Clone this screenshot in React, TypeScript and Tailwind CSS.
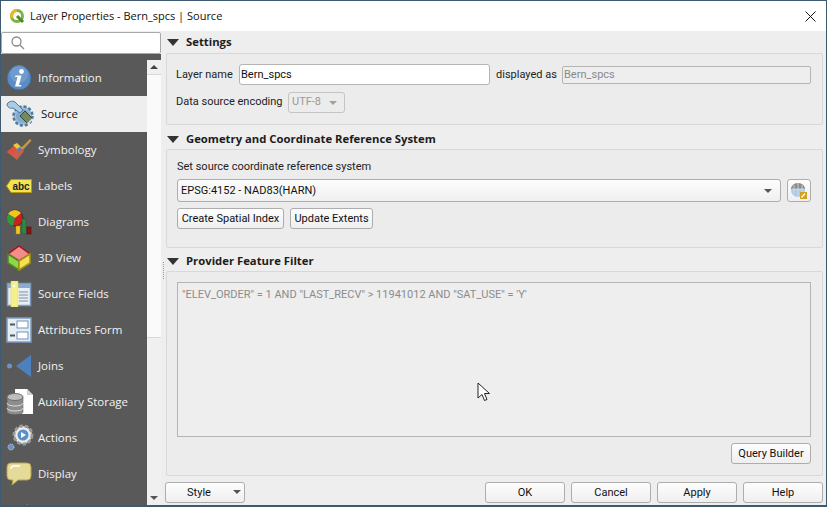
import React from 'react';

const uiFont = "[font-family:'Open_Sans','Noto_Sans',sans-serif]";
const bodyFont = "[font-family:'Roboto','Open_Sans',sans-serif]";

const InfoIcon = () => (
  <svg width="26" height="26" viewBox="0 0 26 26">
    <circle cx="13" cy="13" r="12" fill="#5b8cc4" stroke="#3f6a9e" />
    <circle cx="13" cy="9" r="9" fill="#7ba6d6" opacity="0.6" />
    <circle cx="15.500" cy="6.500" r="2.400" fill="#fff" />
    <path d="M9.500 10.500h6l-2.500 9.500h2.500l-.5 1.500h-6l2.500-9.500h-2.500z" fill="#fff" />
  </svg>
);

const SourceIcon = () => (
  <svg width="28" height="28" viewBox="0 0 28 28">
    <circle cx="17" cy="16" r="9.500" fill="#9cc0de" stroke="#54789a" strokeWidth="2.500" strokeDasharray="3 2" />
    <circle cx="17" cy="16" r="7" fill="#7fa9cd" />
    <path d="M1 4c2-3 7-4 9-1l7 7-3 3-7-5C4 9 1 7 1 4z" fill="#a9cbe6" stroke="#4f7698" />
    <path d="M14 16l5-5 7 7-5 5z" fill="#75895f" stroke="#39452f" />
    <path d="M21 23l5-5 1 1.500-4.500 5z" fill="#d5dde2" />
  </svg>
);

const SymbologyIcon = () => (
  <svg width="26" height="24" viewBox="0 0 26 24">
    <path d="M14 11L24 1l1.500 1.500L16 13z" fill="#c99a3d" />
    <path d="M1 14L11 5l7 8-7 9z" fill="#c8604c" />
    <path d="M1 14L8 8l3 3-6 6z" fill="#e2503c" />
    <path d="M7 7L11 5l5 5-3 3z" fill="#e8c83c" />
    <path d="M11 11l3-2 2 2-3 3z" fill="#4a80c0" />
  </svg>
);

const LabelsIcon = () => (
  <svg width="26" height="14" viewBox="0 0 26 14">
    <path d="M5 .5h20.500v13H5L.5 7z" fill="#f5e34f" stroke="#b79a10" />
    <text x="15" y="10.500" textAnchor="middle" fontSize="10" fontWeight="700" fontFamily="'Liberation Sans',sans-serif" fill="#222">abc</text>
  </svg>
);

const DiagramsIcon = () => (
  <svg width="26" height="26" viewBox="0 0 26 26">
    <circle cx="9" cy="9" r="8" fill="#cc1f1f" stroke="#333" />
    <path d="M9 9L2 5a8 8 0 0 1 13-1z" fill="#f2c61f" />
    <path d="M9 9L2 5a8 8 0 0 0 5 12z" fill="#2f9a3f" />
    <rect x="10" y="17" width="4" height="8" fill="#f2c61f" stroke="#a88510" strokeWidth="0.500" />
    <rect x="16" y="10" width="4" height="15" fill="#2f8a3f" stroke="#1f5a2a" strokeWidth="0.500" />
    <rect x="21" y="18" width="4" height="7" fill="#8a1414" stroke="#500" strokeWidth="0.500" />
  </svg>
);

const ViewIcon = () => (
  <svg width="26" height="26" viewBox="0 0 26 26">
    <path d="M13 1l11 8-11 7L2 9z" fill="#f48c8c" stroke="#a01818" strokeWidth="1.500" />
    <path d="M2 9l11 7v9L2 18z" fill="#8fd64a" stroke="#4f8a20" strokeWidth="1.500" />
    <path d="M24 9l-11 7v9l11-7z" fill="#f5e04f" stroke="#a89414" strokeWidth="1.500" />
  </svg>
);

const FieldsIcon = () => (
  <svg width="26" height="26" viewBox="0 0 26 26">
    <rect x="1.500" y="2.500" width="23" height="22" fill="#e8eef5" stroke="#7c9cc0" strokeWidth="1.500" />
    <rect x="2" y="3" width="22" height="4" fill="#8cabd0" />
    <path d="M13 11h9M13 14h9M13 17h9M13 20h9" stroke="#7c8ea5" />
    <rect x="5" y="0" width="7" height="26" fill="#f5f08a" stroke="#e0d850" strokeWidth="0.500" />
    <rect x="7" y="4" width="2" height="2" fill="#fff" />
  </svg>
);

const FormIcon = () => (
  <svg width="26" height="26" viewBox="0 0 26 26">
    <rect x="1" y="1" width="24" height="24" fill="#e8edf3" stroke="#7c9cc0" strokeWidth="1.500" />
    <rect x="11" y="4" width="11" height="7" fill="#fff" stroke="#6c93c0" />
    <rect x="11" y="15" width="11" height="7" fill="#fff" stroke="#6c93c0" />
    <path d="M4 7.500h5M4 18.500h5" stroke="#4b5a66" strokeWidth="2" />
  </svg>
);

const JoinsIcon = () => (
  <svg width="26" height="24" viewBox="0 0 26 24">
    <circle cx="3.500" cy="12" r="2.500" fill="#6b94c4" />
    <path d="M25 1v22L10 12z" fill="#4d80bd" />
  </svg>
);

const StorageIcon = () => (
  <svg width="28" height="28" viewBox="0 0 28 28">
    <path d="M9 1h12l6 6v19H9z" fill="#fff" />
    <path d="M21 1v6h6z" fill="#cfcfcf" />
    <path d="M1 9v15c0 3.500 16 3.500 16 0V9z" fill="#8d8d8d" stroke="#555" strokeWidth="0.500" />
    <ellipse cx="9" cy="9" rx="8" ry="3.500" fill="#bdbdbd" stroke="#6d6d6d" />
    <path d="M1 15c0 4 16 4 16 0M1 20c0 4 16 4 16 0" fill="none" stroke="#dcdcdc" />
  </svg>
);

const ActionsIcon = () => (
  <svg width="28" height="28" viewBox="0 0 28 28">
    <circle cx="17" cy="11" r="9" fill="#dcdcdc" stroke="#9a9a9a" strokeWidth="3" strokeDasharray="3.500 2" />
    <circle cx="17" cy="11" r="7.500" fill="#ececec" />
    <circle cx="17" cy="11" r="5.500" fill="#5a8fc6" />
    <path d="M15 8l5 3-5 3z" fill="#fff" />
    <circle cx="5" cy="23" r="3" fill="#6b94c4" stroke="#b8c8d8" strokeDasharray="1.500 1" />
  </svg>
);

const DisplayIcon = () => (
  <svg width="26" height="24" viewBox="0 0 26 24">
    <path d="M5 1h16a4 4 0 0 1 4 4v9a4 4 0 0 1-4 4H12l-6 5 1-5H5a4 4 0 0 1-4-4V5a4 4 0 0 1 4-4z" fill="#e6da98" stroke="#b8a550" />
    <path d="M5 7c0-2 1-3 3-3h6" fill="none" stroke="#fff" strokeWidth="1.500" />
  </svg>
);

const RenderingIcon = () => (
  <svg width="26" height="26" viewBox="0 0 26 26">
    <path d="M8 22L22 8" stroke="#e0a030" strokeWidth="2" />
  </svg>
);

const navItems: { label: string; icon: React.ReactNode; selected?: boolean }[] = [
  { label: 'Information', icon: <InfoIcon /> },
  { label: 'Source', icon: <SourceIcon />, selected: true },
  { label: 'Symbology', icon: <SymbologyIcon /> },
  { label: 'Labels', icon: <LabelsIcon /> },
  { label: 'Diagrams', icon: <DiagramsIcon /> },
  { label: '3D View', icon: <ViewIcon /> },
  { label: 'Source Fields', icon: <FieldsIcon /> },
  { label: 'Attributes Form', icon: <FormIcon /> },
  { label: 'Joins', icon: <JoinsIcon /> },
  { label: 'Auxiliary Storage', icon: <StorageIcon /> },
  { label: 'Actions', icon: <ActionsIcon /> },
  { label: 'Display', icon: <DisplayIcon /> },
  { label: 'Rendering', icon: <RenderingIcon /> },
];

const Caret = ({ muted = false }: { muted?: boolean }) => (
  <span className={`block w-0 h-0 border-x-[4px] border-x-transparent border-t-[4px] ${muted ? 'border-t-[#a0a0a0]' : 'border-t-[#555]'}`} />
);

const Button = ({ children, className = '' }: { children: React.ReactNode; className?: string }) => (
  <button className={`h-[21px] pt-[2px] flex items-center justify-center whitespace-nowrap rounded-[3px] border border-[#adadad] bg-gradient-to-b from-[#fdfdfd] to-[#efefef] text-[#111] ${className}`}>
    {children}
  </button>
);

const GroupHeader = ({ title, className = '' }: { title: string; className?: string }) => (
  <div className={`flex items-center ${className}`}>
    <span className="ml-[6px] w-0 h-0 border-x-[6px] border-x-transparent border-t-[7px] border-t-[#333]" />
    <span className={`ml-[7px] text-[11.3px] font-bold text-[#1c1c1c] ${uiFont}`}>{title}</span>
  </div>
);

export default function App() {
  return (
    <div className={`relative w-[827px] h-[507px] overflow-hidden border border-b-[2px] border-[#3d5a6e] bg-[#eeeeee] text-[11px] text-[#222] ${uiFont}`}>
      {/* Title bar */}
      <div className="h-[30px] bg-white flex items-center pl-[8px] pr-[10px]">
        <svg width="16" height="16" viewBox="0 0 16 16">
          <circle cx="8" cy="8" r="5.500" fill="none" stroke="#7cb342" strokeWidth="3" />
          <path d="M3 10A5.500 5.500 0 0 1 8 2.500" fill="none" stroke="#f0b429" strokeWidth="3" />
          <path d="M8 8l6 6" stroke="#4f8a2a" strokeWidth="3" />
        </svg>
        <span className="ml-[5px] text-[#111]">Layer Properties - Bern_spcs | Source</span>
        <svg className="ml-auto" width="11" height="11" viewBox="0 0 11 11">
          <path d="M.5.500l10 10M10.500.500l-10 10" stroke="#111" />
        </svg>
      </div>

      <div className="flex h-[474px]">
        {/* Sidebar */}
        <div className="w-[160px] shrink-0 flex flex-col">
          <div className="h-[22px] mt-[1px] flex items-center bg-white border border-[#a9a9a9] rounded-[2px] pl-[9px]">
            <svg width="14" height="14" viewBox="0 0 14 14" fill="none" stroke="#8a8a8a" strokeWidth="1.300">
              <circle cx="5.500" cy="5.500" r="4.500" />
              <path d="M9 9l4 4" />
            </svg>
          </div>
          <div className="flex-1 flex min-h-0 overflow-hidden bg-[#595959] pt-[6px]">
            <div className="w-[146px] overflow-hidden">
              {navItems.map((item) => (
                <div
                  key={item.label}
                  className={`h-9 flex items-center whitespace-nowrap text-[11.5px] ${item.selected ? 'bg-[#eeeeee] text-[#111]' : 'text-[#f2f2f2]'}`}
                >
                  <span className="w-[37px] pl-[5px] shrink-0 flex items-center">{item.icon}</span>
                  <span className={item.selected ? 'ml-[3px]' : ''}>{item.label}</span>
                </div>
              ))}
            </div>
            <div className="w-[14px] bg-[#f0f0f0] flex flex-col items-center">
              <div className="h-[14px] flex items-center justify-center">
                <span className="block w-0 h-0 border-x-[4px] border-x-transparent border-b-[4px] border-b-[#444]" />
              </div>
              <span className="block w-full h-[264px] bg-[#fafafa] border-y border-[#d8d8d8]" />
              <div className="mt-auto h-[14px] flex items-center justify-center">
                <Caret />
              </div>
            </div>
          </div>
        </div>

        {/* Main panel */}
        <div className={`relative flex-1 min-w-0 flex flex-col pr-[3px] ${bodyFont}`}>
          <GroupHeader title="Settings" className="h-[22px]" />
          <div className="ml-[5px] h-[72px] border border-[#d8d8d8] rounded-[2px] bg-[#ececec] pl-[9px] pr-[11px] pt-[10px]">
            <div className="flex items-center h-[21px] whitespace-nowrap">
              <span className="w-[63px] shrink-0 pt-[1px]">Layer name</span>
              <div className="w-[251px] h-[21px] pl-[1px] pt-[1px] flex items-center bg-white border border-[#b4b4b4] rounded-[3px] text-[#111]">Bern_spcs</div>
              <span className="ml-[6px] w-[66px] shrink-0 pt-[1px]">displayed as</span>
              <div className="flex-1 h-[18px] pl-[1px] pt-[1px] flex items-center bg-[#eeeeee] border border-[#b4b4b4] rounded-[2px] text-[#8a8a8a]">Bern_spcs</div>
            </div>
            <div className="flex items-center h-[21px] mt-[7px] whitespace-nowrap">
              <span className="w-[112px] shrink-0">Data source encoding</span>
              <div className="w-[57px] h-[21px] px-[3px] flex items-center justify-between border border-[#c4c4c4] rounded-[3px] text-[#999]">
                UTF-8
                <span className="mr-[4px]"><Caret muted /></span>
              </div>
            </div>
          </div>

          <GroupHeader title="Geometry and Coordinate Reference System" className="h-[24px] pt-[4px]" />
          <div className="ml-[5px] h-[99px] border border-[#d8d8d8] rounded-[2px] bg-[#ececec] pl-[10px] pr-[11px] pt-[8px]">
            <div className="h-[18px] pt-[1px] flex items-center">Set source coordinate reference system</div>
            <div className="flex mt-[3px] gap-[6px]">
              <div className="flex-1 h-[23px] pl-[3px] pr-[8px] flex items-center justify-between bg-gradient-to-b from-[#fdfdfd] to-[#f0f0f0] border border-[#adadad] rounded-[3px] text-[#111]">
                <span className="pt-[1px]">EPSG:4152 - NAD83(HARN)</span>
                <Caret />
              </div>
              <div className="w-[24px] h-[23px] flex items-center justify-center border border-[#adadad] rounded-[3px] bg-gradient-to-b from-[#fdfdfd] to-[#efefef]">
                <svg width="18" height="18" viewBox="0 0 18 18">
                  <circle cx="8" cy="8" r="7" fill="#a9cbe8" />
                  <path d="M1 7a7 6 0 0 1 14 0z" fill="#8c8c8c" />
                  <path d="M2 7h12M8 1v14M4 3v9M12 3v9" stroke="#dfe7ee" strokeWidth="0.700" />
                  <rect x="10" y="10" width="7" height="7" fill="#d2a21e" />
                  <path d="M11.500 15.500l3.500-4" stroke="#fff" strokeWidth="1.300" />
                </svg>
              </div>
            </div>
            <div className="flex mt-[6px] gap-[6px]">
              <Button className="w-[107px]">Create Spatial Index</Button>
              <Button className="w-[83px]">Update Extents</Button>
            </div>
          </div>

          <GroupHeader title="Provider Feature Filter" className="h-[23px] pt-[3px]" />
          <div className="ml-[5px] h-[205px] border border-[#d8d8d8] rounded-[2px] bg-[#ececec] pl-[10px] pr-[11px] pt-[10px]">
            <div className="h-[155px] border border-[#b4b4b4] bg-[#eeeeee] pl-[4px] pt-[4px] text-[#8c8c8c]">
              "ELEV_ORDER" = 1 AND "LAST_RECV" &gt; 11941012 AND "SAT_USE" = 'Y'
            </div>
            <div className="flex justify-end mt-[6px]">
              <Button className="w-[80px]">Query Builder</Button>
            </div>
          </div>

          <div className="flex items-center justify-between mt-[6px] pl-[4px]">
            <Button className="w-[80px] relative">
              <span className="mr-[12px]">Style</span>
              <span className="absolute right-[3px] top-[7px]"><Caret /></span>
            </Button>
            <div className="flex gap-[6px]">
              <Button className="w-[80px]">OK</Button>
              <Button className="w-[80px]">Cancel</Button>
              <Button className="w-[80px]">Apply</Button>
              <Button className="w-[80px]">Help</Button>
            </div>
          </div>

          {/* Splitter handle */}
          <div className="absolute left-[2px] top-[231px] h-[17px] border-l border-dotted border-[#9a9a9a]" />
        </div>
      </div>

      {/* Mouse pointer */}
      <svg className="absolute left-[476px] top-[381px]" width="14" height="20" viewBox="0 0 14 20">
        <path d="M1 1v15l4-3.500 2.500 6 2.500-1-2.500-6H12.500z" fill="#fff" stroke="#222" />
      </svg>
    </div>
  );
}
